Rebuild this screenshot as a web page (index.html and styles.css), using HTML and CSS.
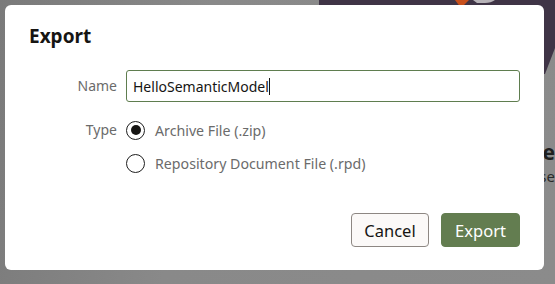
FILE: index.html
```html
<!DOCTYPE html>
<html lang="en">
<head>
<meta charset="utf-8">
<title>Export</title>
<link rel="stylesheet" href="styles.css">
</head>
<body>
<div class="page">
  <div class="hero">
    <svg class="hero-art" width="236" height="80" viewBox="0 0 236 80" aria-hidden="true">
      <path d="M0 0 H236 V48 L226 74 H0 Z" fill="#3f3446"/>
      <path d="M136 0 L150 0 L142 8 Z" fill="#c8501c"/>
      <path d="M154 0 H176 Q172 3 166 3 H158 Z" fill="#b7b3b8"/>
    </svg>
  </div>
  <div class="behind">
    <div class="behind-title">Create</div>
    <div class="behind-sub">Browse</div>
  </div>

  <div class="dialog" role="dialog" aria-labelledby="dlg-title">
    <h1 class="dialog-title" id="dlg-title">Export</h1>
    <div class="form">
      <label class="form-label" for="name">Name</label>
      <div class="field">
        <div class="input"><span class="input-text">HelloSemanticModel</span><span class="caret"></span></div>
      </div>
      <div class="form-label type-label">Type</div>
      <div class="radios">
        <div class="radio-row">
          <span class="radio checked"></span>
          <span class="radio-text">Archive File (.zip)</span>
        </div>
        <div class="radio-row">
          <span class="radio"></span>
          <span class="radio-text">Repository Document File (.rpd)</span>
        </div>
      </div>
    </div>
    <div class="actions">
      <button class="btn btn-secondary">Cancel</button>
      <button class="btn btn-primary">Export</button>
    </div>
  </div>
</div>
</body>
</html>
```

FILE: styles.css
```css
* { box-sizing: border-box; }

html, body {
  margin: 0;
  padding: 0;
  width: 555px;
  height: 284px;
  overflow: hidden;
}

body {
  font-family: "Noto Sans", "Open Sans", sans-serif;
  background: linear-gradient(100deg, #7a7a7a 0%, #898989 35%, #8b8b8b 100%);
}

.page {
  position: relative;
  width: 555px;
  height: 284px;
  padding: 5px;
}

.hero {
  position: absolute;
  top: 0;
  left: 319px;
  width: 236px;
  height: 80px;
  z-index: 0;
}

.hero-art { display: block; }

.behind {
  position: absolute;
  top: 138px;
  right: 0;
  z-index: 0;
  color: #1f1f1f;
  white-space: nowrap;
  text-align: right;
}

.behind-title {
  font-size: 21px;
  font-weight: 700;
  line-height: 28px;
}

.behind-sub {
  font-size: 15px;
  line-height: 20px;
  color: #2a2a2a;
}

.dialog {
  position: relative;
  z-index: 1;
  width: 539px;
  height: 265px;
  background: #ffffff;
  border-radius: 6px;
  padding: 19px 24px 23px 24px;
  display: flex;
  flex-direction: column;
}

.dialog-title {
  margin: 0;
  font-size: 19px;
  font-weight: 700;
  line-height: 24px;
  color: #161513;
}

.form {
  margin-top: 22px;
  display: grid;
  grid-template-columns: 88px 1fr;
  column-gap: 9px;
  row-gap: 12px;
  align-items: start;
}

.form-label {
  text-align: right;
  font-size: 14px;
  line-height: 32px;
  color: #6b6b6b;
}

.type-label { line-height: 20px; margin-top: 6px; }

.input {
  height: 32px;
  border: 1px solid #5f7d4f;
  border-radius: 3px;
  padding: 0 6px;
  display: flex;
  align-items: center;
}

.input-text {
  font-size: 14px;
  color: #161513;
}

.caret {
  display: inline-block;
  width: 1px;
  height: 17px;
  background: #161513;
}

.radios {
  display: flex;
  flex-direction: column;
  gap: 13px;
}

.radio-row {
  display: flex;
  align-items: center;
  height: 20px;
}

.radios .radio-row:first-child { margin-top: 6px; }

.radio {
  width: 19px;
  height: 19px;
  border: 1.5px solid #1e1e1e;
  border-radius: 50%;
  display: flex;
  align-items: center;
  justify-content: center;
  flex: none;
  margin-right: 10px;
}

.radio.checked::after {
  content: "";
  width: 10px;
  height: 10px;
  border-radius: 50%;
  background: #161513;
}

.radio-text {
  font-size: 14.2px;
  color: #6b6b6b;
}

.actions {
  margin-top: auto;
  display: flex;
  justify-content: flex-end;
  gap: 12px;
}

.btn {
  font-family: "Noto Sans", "Open Sans", sans-serif;
  font-size: 16.5px;
  height: 34px;
  padding: 0 12px;
  border-radius: 4px;
  cursor: pointer;
}

.btn-secondary {
  background: #fbf9f8;
  border: 1px solid #8d8783;
  color: #161513;
  width: 78px;
}

.btn-primary {
  background: #637d50;
  border: 1px solid #637d50;
  color: #ffffff;
  width: 79px;
}
```
